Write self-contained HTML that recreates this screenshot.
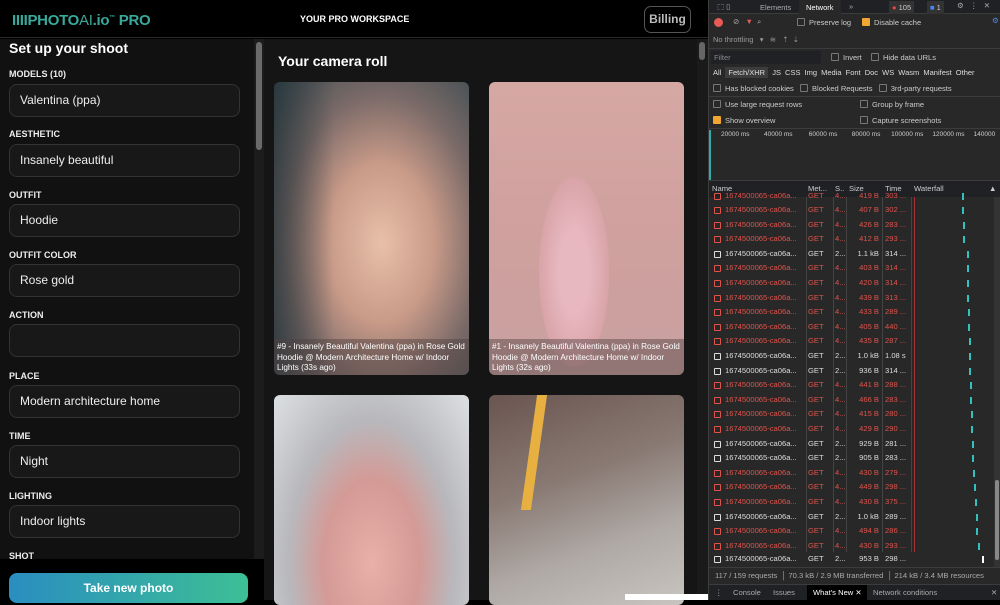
<!DOCTYPE html>
<html><head><meta charset="utf-8"><style>
*{box-sizing:border-box;margin:0;padding:0}
body{width:1000px;height:600px;overflow:hidden;background:#000;font-family:"Liberation Sans",sans-serif;position:relative}
.a{position:absolute}
.hdr{left:0;top:0;width:708px;height:38px;background:#000;border-bottom:1px solid #2a2a2a}
.logo{left:12px;top:12px;font-size:15px;font-weight:bold;color:#3aa89a;letter-spacing:-0.3px}
.left{left:0;top:39px;width:254px;height:561px;background:#111}
.lab{left:9px;font-size:9px;font-weight:bold;color:#eee}
.inp{left:9px;width:231px;height:33px;background:#181818;border:1px solid #333;border-radius:8px;color:#eee;font-size:12px;padding:8px 10px}
.main{left:264px;top:39px;width:433px;height:561px;background:#151515}
.cap{color:#fff;font-size:8.2px;line-height:10.5px;padding:3px 3px;background:rgba(80,65,65,.45);height:36px;bottom:0;left:0;right:0;position:absolute}
.ph{border-radius:6px;overflow:hidden}
.dt{left:708px;top:0;width:292px;height:600px;background:#282828;font-size:7.5px;color:#ccc;overflow:hidden;border-left:1px solid #3c3c3c}
.r{position:absolute;left:0;width:292px;height:14.6px;font-size:7.6px;line-height:14.6px}
.r span{position:absolute;top:0}
.r .n{left:16px}.r .m{left:99px}.r .s{left:126px}.r .z{left:138px;width:32px;text-align:right}.r .t{left:176px}
.r i{position:absolute;left:5px;top:4px;width:7px;height:7px;border:1px solid currentColor;border-radius:1px}
.rd{color:#e0524a}.wh{color:#ddd}
.r b{position:absolute;top:4px;width:2px;height:7px;background:#35c0c0}
.cb{display:inline-block;width:8px;height:8px;border:1px solid #777;border-radius:1px;vertical-align:-1px;margin-right:4px}
.cy{background:#f0a630;border-color:#f0a630}
</style></head><body>
<div class="a hdr"></div>
<div class="a logo">IIIIPHOTO<span style="font-weight:normal">AI</span>.io<sup style="font-size:6px">™</sup> PRO</div>
<div class="a" style="left:300px;top:14px;font-size:9px;font-weight:bold;color:#fff">YOUR PRO WORKSPACE</div>
<div class="a" style="left:644px;top:6px;width:47px;height:27px;border:1px solid #555;border-radius:7px;color:#bbb;font-size:12px;font-weight:bold;text-align:center;line-height:25px">Billing</div>

<div class="a left"></div>
<div class="a" style="left:9px;top:40px;font-size:14px;font-weight:bold;color:#fff">Set up your shoot</div>
<div class="a lab" style="top:69px">MODELS (10)</div><div class="a inp" style="top:84px">Valentina (ppa)</div>
<div class="a lab" style="top:129px">AESTHETIC</div><div class="a inp" style="top:144px">Insanely beautiful</div>
<div class="a lab" style="top:190px">OUTFIT</div><div class="a inp" style="top:204px">Hoodie</div>
<div class="a lab" style="top:250px">OUTFIT COLOR</div><div class="a inp" style="top:264px">Rose gold</div>
<div class="a lab" style="top:310px">ACTION</div><div class="a inp" style="top:324px"></div>
<div class="a lab" style="top:371px">PLACE</div><div class="a inp" style="top:385px">Modern architecture home</div>
<div class="a lab" style="top:431px">TIME</div><div class="a inp" style="top:445px">Night</div>
<div class="a lab" style="top:491px">LIGHTING</div><div class="a inp" style="top:505px">Indoor lights</div>
<div class="a lab" style="top:551px">SHOT</div>
<div class="a" style="left:0;top:559px;width:264px;height:41px;background:#000"></div>
<div class="a" style="left:9px;top:573px;width:239px;height:30px;border-radius:8px;background:linear-gradient(90deg,#2a8ec0,#3dbf95);color:#fff;font-weight:bold;font-size:12px;text-align:center;padding-top:8px">Take new photo</div>
<div class="a" style="left:254px;top:39px;width:10px;height:520px;background:#1c1c1c"></div>
<div class="a" style="left:256px;top:42px;width:6px;height:108px;background:#6a6a6a;border-radius:3px"></div>

<div class="a main"></div>
<div class="a" style="left:278px;top:53px;font-size:14px;font-weight:bold;color:#fff">Your camera roll</div>
<div class="a ph" style="left:274px;top:82px;width:195px;height:293px;background:radial-gradient(ellipse at 55% 55%,#e8c0a8 0%,#c89a88 35%,#7a6a68 65%,#3a4a50 100%)"><div class="a" style="left:0;top:0;width:60px;height:293px;background:linear-gradient(90deg,rgba(30,45,50,.6),transparent)"></div><div class="cap">#9 - Insanely Beautiful Valentina (ppa) in Rose Gold Hoodie @ Modern Architecture Home w/ Indoor Lights (33s ago)</div></div>
<div class="a ph" style="left:489px;top:82px;width:195px;height:293px;background:linear-gradient(180deg,#d6a8a4,#cfa09e 50%,#c9a0a0);"><div class="a" style="left:50px;top:95px;width:70px;height:190px;background:radial-gradient(ellipse,#e8b8c0 30%,#d8a4a8 70%,transparent 72%)"></div><div class="cap">#1 - Insanely Beautiful Valentina (ppa) in Rose Gold Hoodie @ Modern Architecture Home w/ Indoor Lights (32s ago)</div></div>
<div class="a ph" style="left:274px;top:395px;width:195px;height:210px;background:radial-gradient(ellipse at 50% 80%,#e8b0a8 0%,#d49a96 35%,#b8b8bc 60%,#dde0e2 100%)"></div>
<div class="a ph" style="left:489px;top:395px;width:195px;height:210px;background:linear-gradient(160deg,#6a5550,#8a7a74 40%,#b0aaa6 70%,#c8c4c0)"><div class="a" style="left:40px;top:0;width:10px;height:115px;background:#e8b040;transform:skewX(-8deg)"></div></div>
<div class="a" style="left:697px;top:39px;width:11px;height:561px;background:#1a1a1a"></div>
<div class="a" style="left:699px;top:42px;width:6px;height:18px;background:#666;border-radius:3px"></div>
<div class="a" style="left:625px;top:594px;width:83px;height:6px;background:#fff"></div>

<div class="a dt">
<div class="a" style="left:0;top:0;width:292px;height:14px;background:#202124;border-bottom:1px solid #3c3c3c"></div>
<div class="a" style="left:51px;top:3px;color:#aaa">Elements</div>
<div class="a" style="left:90px;top:0;width:42px;height:14px;background:#282828;color:#fff;padding:3px 7px">Network</div>
<div class="a" style="left:140px;top:2px;color:#aaa">»</div>
<div class="a" style="left:180px;top:1px;color:#ccc;background:#333;padding:2px 3px"><span style="color:#e44">●</span> 105</div>
<div class="a" style="left:218px;top:1px;color:#ccc;background:#333;padding:2px 3px"><span style="color:#48f">■</span> 1</div>
<div class="a" style="left:248px;top:1px;color:#aaa">⚙ &nbsp; ⋮ &nbsp; ✕</div>
<div class="a" style="left:8px;top:2px;color:#aaa">⬚ ▯</div>
<div class="a" style="left:5px;top:18px;width:9px;height:9px;border-radius:50%;background:#e65b56"></div>
<div class="a" style="left:24px;top:17px;color:#aaa">⊘ &nbsp; <span style="color:#e65b56">▼</span> &nbsp;⌕</div>
<div class="a" style="left:88px;top:18px"><span class="cb"></span>Preserve log</div>
<div class="a" style="left:153px;top:18px"><span class="cb cy"></span>Disable cache</div>
<div class="a" style="left:283px;top:16px;color:#4a8df0">⚙</div>
<div class="a" style="left:4px;top:35px;color:#999">No throttling &nbsp; ▾ &nbsp; ≋ &nbsp; ⇡ &nbsp;⇣</div>
<div class="a" style="left:0;top:48px;width:292px;height:1px;background:#3c3c3c"></div>
<div class="a" style="left:2px;top:51px;width:110px;height:13px;background:#202124;color:#888;padding:2px 3px">Filter</div>
<div class="a" style="left:122px;top:53px"><span class="cb"></span>Invert</div>
<div class="a" style="left:162px;top:53px"><span class="cb"></span>Hide data URLs</div>
<div class="a" style="left:4px;top:68px;color:#ddd;word-spacing:2px">All <span style="background:#3c3c3c;padding:1px 3px">Fetch/XHR</span> JS CSS Img Media Font Doc WS Wasm Manifest Other</div>
<div class="a" style="left:4px;top:84px"><span class="cb"></span>Has blocked cookies &nbsp; <span class="cb"></span>Blocked Requests &nbsp; <span class="cb"></span>3rd-party requests</div>
<div class="a" style="left:0;top:96px;width:292px;height:1px;background:#3c3c3c"></div>
<div class="a" style="left:4px;top:100px"><span class="cb"></span>Use large request rows</div>
<div class="a" style="left:151px;top:100px"><span class="cb"></span>Group by frame</div>
<div class="a" style="left:4px;top:116px"><span class="cb cy"></span>Show overview</div>
<div class="a" style="left:151px;top:116px"><span class="cb"></span>Capture screenshots</div>
<div class="a" style="left:0;top:128px;width:292px;height:1px;background:#3c3c3c"></div>
<div class="a" style="left:12px;top:131px;font-size:6.5px;color:#ccc;word-spacing:0">20000 ms &nbsp; &nbsp; &nbsp; &nbsp;40000 ms &nbsp; &nbsp; &nbsp; &nbsp; 60000 ms &nbsp; &nbsp; &nbsp; &nbsp;80000 ms &nbsp; &nbsp; &nbsp;100000 ms &nbsp; &nbsp; 120000 ms &nbsp; &nbsp; 140000</div>
<div class="a" style="left:0;top:130px;width:2px;height:50px;background:#3aa"></div>
<div class="a" style="left:0;top:180px;width:292px;height:1px;background:#3c3c3c"></div>
<div class="a" style="left:0;top:181px;width:292px;height:16px;background:#202124;color:#ccc;font-size:7.6px;line-height:16px">
<span class="a" style="left:3px">Name</span><span class="a" style="left:99px">Met...</span><span class="a" style="left:126px">S..</span><span class="a" style="left:140px">Size</span><span class="a" style="left:176px">Time</span><span class="a" style="left:205px">Waterfall</span><span class="a" style="left:280px">▲</span></div>
<div class="a" style="left:0;top:197px;width:292px;height:370px">
<div class="a" style="left:97px;top:0;width:1px;height:370px;background:#444"></div>
<div class="a" style="left:124px;top:0;width:1px;height:370px;background:#444"></div>
<div class="a" style="left:137px;top:0;width:1px;height:370px;background:#444"></div>
<div class="a" style="left:173px;top:0;width:1px;height:370px;background:#444"></div>
<div class="a" style="left:202px;top:0;width:1px;height:370px;background:#444"></div>
<div class="a" style="left:205px;top:0;width:1px;height:370px;background:#a33"></div>
<div class="r rd" style="top:-8px"><i></i><span class="n">1674500065-ca06a...</span><span class="m">GET</span><span class="s">4...</span><span class="z">419 B</span><span class="t">303 ...</span><b style="left:253px"></b></div>
<div class="r rd" style="top:6px"><i></i><span class="n">1674500065-ca06a...</span><span class="m">GET</span><span class="s">4...</span><span class="z">407 B</span><span class="t">302 ...</span><b style="left:253px"></b></div>
<div class="r rd" style="top:20.6px"><i></i><span class="n">1674500065-ca06a...</span><span class="m">GET</span><span class="s">4...</span><span class="z">426 B</span><span class="t">283 ...</span><b style="left:254px"></b></div>
<div class="r rd" style="top:35.2px"><i></i><span class="n">1674500065-ca06a...</span><span class="m">GET</span><span class="s">4...</span><span class="z">412 B</span><span class="t">293 ...</span><b style="left:254px"></b></div>
<div class="r wh" style="top:49.8px"><i></i><span class="n">1674500065-ca06a...</span><span class="m">GET</span><span class="s">2...</span><span class="z">1.1 kB</span><span class="t">314 ...</span><b style="left:258px"></b></div>
<div class="r rd" style="top:64.4px"><i></i><span class="n">1674500065-ca06a...</span><span class="m">GET</span><span class="s">4...</span><span class="z">403 B</span><span class="t">314 ...</span><b style="left:258px"></b></div>
<div class="r rd" style="top:79px"><i></i><span class="n">1674500065-ca06a...</span><span class="m">GET</span><span class="s">4...</span><span class="z">420 B</span><span class="t">314 ...</span><b style="left:258px"></b></div>
<div class="r rd" style="top:93.6px"><i></i><span class="n">1674500065-ca06a...</span><span class="m">GET</span><span class="s">4...</span><span class="z">439 B</span><span class="t">313 ...</span><b style="left:258px"></b></div>
<div class="r rd" style="top:108.2px"><i></i><span class="n">1674500065-ca06a...</span><span class="m">GET</span><span class="s">4...</span><span class="z">433 B</span><span class="t">289 ...</span><b style="left:259px"></b></div>
<div class="r rd" style="top:122.8px"><i></i><span class="n">1674500065-ca06a...</span><span class="m">GET</span><span class="s">4...</span><span class="z">405 B</span><span class="t">440 ...</span><b style="left:259px"></b></div>
<div class="r rd" style="top:137.4px"><i></i><span class="n">1674500065-ca06a...</span><span class="m">GET</span><span class="s">4...</span><span class="z">435 B</span><span class="t">287 ...</span><b style="left:260px"></b></div>
<div class="r wh" style="top:152px"><i></i><span class="n">1674500065-ca06a...</span><span class="m">GET</span><span class="s">2...</span><span class="z">1.0 kB</span><span class="t">1.08 s</span><b style="left:260px"></b></div>
<div class="r wh" style="top:166.6px"><i></i><span class="n">1674500065-ca06a...</span><span class="m">GET</span><span class="s">2...</span><span class="z">936 B</span><span class="t">314 ...</span><b style="left:260px"></b></div>
<div class="r rd" style="top:181.2px"><i></i><span class="n">1674500065-ca06a...</span><span class="m">GET</span><span class="s">4...</span><span class="z">441 B</span><span class="t">288 ...</span><b style="left:261px"></b></div>
<div class="r rd" style="top:195.8px"><i></i><span class="n">1674500065-ca06a...</span><span class="m">GET</span><span class="s">4...</span><span class="z">466 B</span><span class="t">283 ...</span><b style="left:261px"></b></div>
<div class="r rd" style="top:210.4px"><i></i><span class="n">1674500065-ca06a...</span><span class="m">GET</span><span class="s">4...</span><span class="z">415 B</span><span class="t">280 ...</span><b style="left:262px"></b></div>
<div class="r rd" style="top:225px"><i></i><span class="n">1674500065-ca06a...</span><span class="m">GET</span><span class="s">4...</span><span class="z">429 B</span><span class="t">290 ...</span><b style="left:262px"></b></div>
<div class="r wh" style="top:239.6px"><i></i><span class="n">1674500065-ca06a...</span><span class="m">GET</span><span class="s">2...</span><span class="z">929 B</span><span class="t">281 ...</span><b style="left:263px"></b></div>
<div class="r wh" style="top:254.2px"><i></i><span class="n">1674500065-ca06a...</span><span class="m">GET</span><span class="s">2...</span><span class="z">905 B</span><span class="t">283 ...</span><b style="left:263px"></b></div>
<div class="r rd" style="top:268.8px"><i></i><span class="n">1674500065-ca06a...</span><span class="m">GET</span><span class="s">4...</span><span class="z">430 B</span><span class="t">279 ...</span><b style="left:264px"></b></div>
<div class="r rd" style="top:283.4px"><i></i><span class="n">1674500065-ca06a...</span><span class="m">GET</span><span class="s">4...</span><span class="z">449 B</span><span class="t">298 ...</span><b style="left:265px"></b></div>
<div class="r rd" style="top:298px"><i></i><span class="n">1674500065-ca06a...</span><span class="m">GET</span><span class="s">4...</span><span class="z">430 B</span><span class="t">375 ...</span><b style="left:266px"></b></div>
<div class="r wh" style="top:312.6px"><i></i><span class="n">1674500065-ca06a...</span><span class="m">GET</span><span class="s">2...</span><span class="z">1.0 kB</span><span class="t">289 ...</span><b style="left:267px"></b></div>
<div class="r rd" style="top:327.2px"><i></i><span class="n">1674500065-ca06a...</span><span class="m">GET</span><span class="s">4...</span><span class="z">494 B</span><span class="t">286 ...</span><b style="left:267px"></b></div>
<div class="r rd" style="top:341.8px"><i></i><span class="n">1674500065-ca06a...</span><span class="m">GET</span><span class="s">4...</span><span class="z">430 B</span><span class="t">293 ...</span><b style="left:269px"></b></div>
<div class="r rd" style="top:356.4px"><i></i><span class="n">1674500065-ca06a...</span><span class="m">GET</span><span class="s">4...</span><span class="z">425 B</span><span class="t">294 ...</span><b style="left:271px"></b></div>
</div>
<div class="r wh" style="top:552px;background:#282828"><i></i><span class="n">1674500065-ca06a...</span><span class="m">GET</span><span class="s">2...</span><span class="z">953 B</span><span class="t">298 ...</span><b style="left:273px;background:#fff"></b></div>
<div class="a" style="left:285px;top:197px;width:6px;height:370px;background:#333"></div>
<div class="a" style="left:286px;top:480px;width:4px;height:80px;background:#888;border-radius:2px"></div>
<div class="a" style="left:0;top:567px;width:292px;height:17px;background:#282828;border-top:1px solid #3c3c3c;color:#aaa;font-size:7.6px;padding:3px 6px;word-spacing:0">117 / 159 requests &nbsp;│ 70.3 kB / 2.9 MB transferred &nbsp;│ 214 kB / 3.4 MB resources</div>
<div class="a" style="left:0;top:584px;width:292px;height:16px;background:#202124;border-top:1px solid #3c3c3c;color:#aaa;font-size:7.6px;line-height:15px">
<span class="a" style="left:6px">⋮</span><span class="a" style="left:24px">Console</span><span class="a" style="left:64px">Issues</span>
<span class="a" style="left:98px;width:60px;height:15px;background:#000;color:#fff;padding-left:6px">What's New ✕</span>
<span class="a" style="left:164px">Network conditions</span><span class="a" style="left:282px">✕</span></div>
</div>
</body></html>
